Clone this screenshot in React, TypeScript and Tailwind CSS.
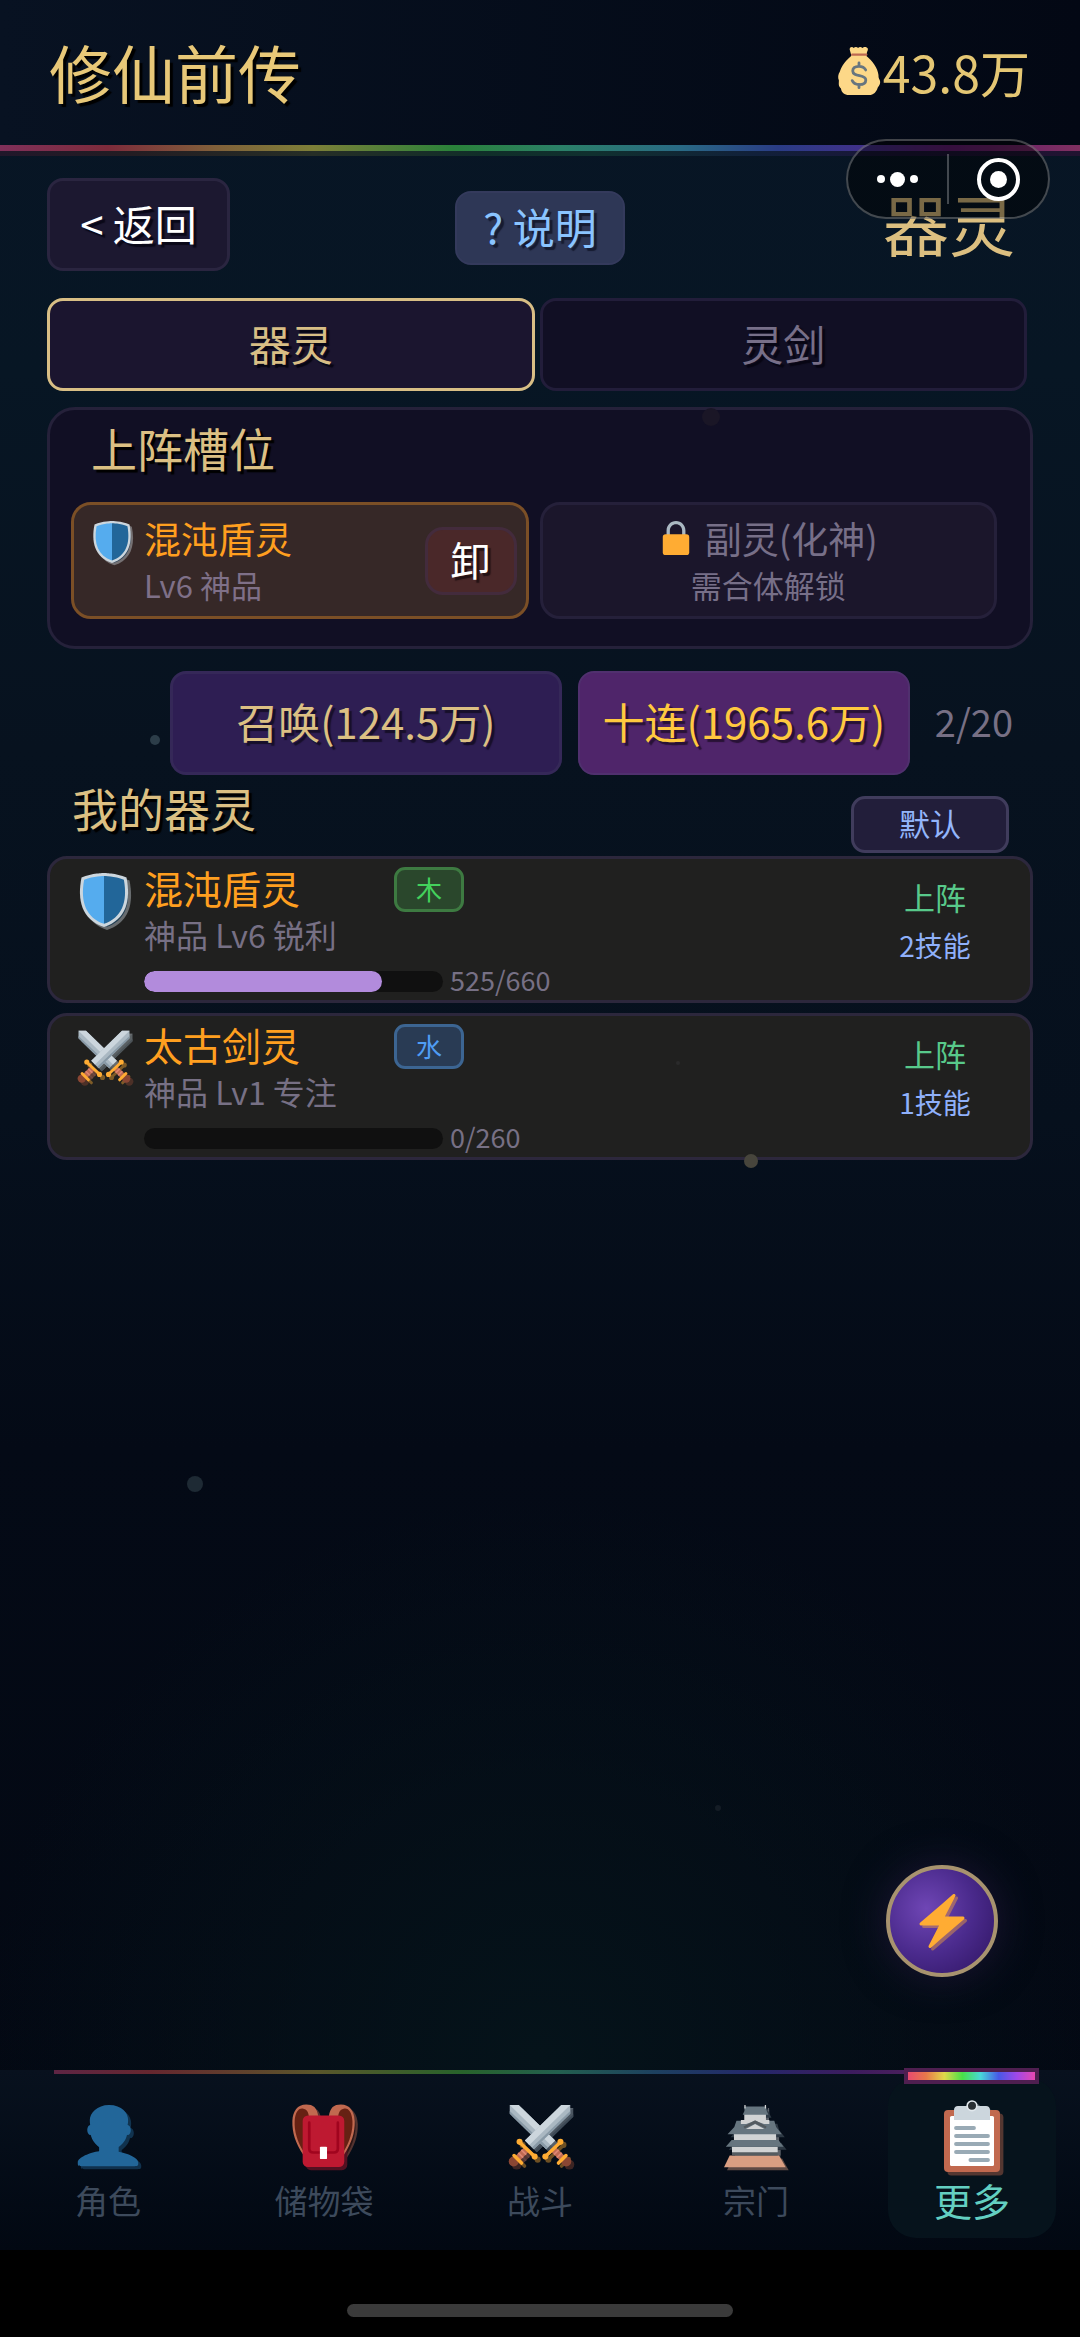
import React, { useState } from "react";
import clsx from "clsx";

type IconProps = { className?: string; shadow?: number };

type Spirit = {
  id: number;
  name: string;
  info: string;
  exp: number;
  maxExp: number;
  element: string;
  skills: number;
  icon: React.ComponentType<IconProps>;
};

// emoji style icon, drawn twice so the lower copy works as its shadow
function Emoji({ className, shadow = 0, children }: IconProps & { children: React.ReactNode }) {
  return (
    <svg viewBox="0 0 36 36" className={clsx("shrink-0 overflow-visible", className)} aria-hidden="true">
      {shadow > 0 && (
        <g opacity={0.42} transform={`translate(${shadow} ${shadow})`}>
          {children}
        </g>
      )}
      {children}
    </svg>
  );
}

function ShieldIcon(props: IconProps) {
  return (
    <Emoji {...props}>
      <path fill="#CCD6DD" d="M33 3c-7-3-15-3-15-3S10 0 3 3C0 18 3 31 18 36c15-5 18-18 15-33z" />
      <path fill="#55ACEE" d="M18 33.884C6.412 29.729 1.961 19.831 4.76 4.444 11.063 2.029 17.928 2 18 2v31.884z" />
      <path fill="#226699" d="M31.24 4.443C25.029 2.041 18.138 2.001 18.071 2.001L18 2v31.884c11.588-4.155 16.039-14.053 13.24-29.441z" />
    </Emoji>
  );
}

function Sword() {
  return (
    <>
      <path fill="#AAB8C2" d="M35 .5h-5L9.500 20.500l5 5L35 5.500z" />
      <path fill="#CCD6DD" d="M30 .5h5L12 23l-2.500-2.500z" />
      <path fill="#8899A6" d="M35 5.500V4L13.500 24.500l1 1z" />
      <path stroke="#BF6952" strokeWidth="3.600" d="M10.500 25.500L5 31" />
      <path stroke="#DD8773" strokeWidth="1" d="M7.500 25.800l2.700 2.700M5.800 27.500l2.700 2.700" />
      <circle fill="#8A4633" cx="3.200" cy="32.400" r="2.800" />
      <path stroke="#FFAC33" strokeWidth="2" strokeLinecap="round" d="M6.500 21.500l8.500 8M3.400 29l4.200 4.200" />
      <circle fill="#FFAC33" cx="6.500" cy="21.300" r="1.700" />
      <circle fill="#FFAC33" cx="15" cy="29.600" r="1.700" />
    </>
  );
}

function SwordsIcon(props: IconProps) {
  return (
    <Emoji {...props}>
      <g fill="none" transform="translate(36 0) scale(-1 1)">
        <Sword />
      </g>
      <g fill="none">
        <Sword />
      </g>
    </Emoji>
  );
}

function MoneyBagIcon(props: IconProps) {
  return (
    <Emoji {...props}>
      <path
        fill="#FDD888"
        d="M12.300 6.500L11 1.800C11-.2 13.200-.4 14 .8c1-1.200 2.600-1 3.300 0 .8-1 2.400-1 3.200 0C21.500-.4 24-.4 24.600 1.200c.3.800-.2 1.800-.6 2.600l-.4 3c4.400 3.600 8.500 9.200 9 14.200 0 1.600.2 2.400.9 3.800 1 2.300-.2 4.200-1.500 5.700-.8 3-3 5.500-6.500 5.500H10.500c-3.500 0-5.700-1.900-6-4.900C2.200 29.500 3 27 2.900 25c-.9-2.200-.6-4.600.7-6.500C5 13.800 8.500 9.700 12.300 6.500z"
      />
      <path stroke="#BE6952" strokeWidth="1.800" strokeLinecap="round" d="M13 5.700h10.400" />
      <path
        fill="none"
        stroke="#67757F"
        strokeWidth="2.100"
        strokeLinecap="round"
        d="M18 12v2.500M18 28v2.500M23 17.200c-1-1.900-2.800-2.700-5-2.700-2.900 0-4.700 1.400-4.700 3.500 0 4.800 9.800 2.200 9.800 6.700 0 2.200-2 3.500-5 3.500-2.500 0-4.400-1-5.200-3"
      />
    </Emoji>
  );
}

function LockIcon(props: IconProps) {
  return (
    <Emoji {...props}>
      <path fill="#AAB8C2" d="M18 0c-5.500 0-10 4.500-10 10v8h3.500v-8c0-3.600 2.900-6.500 6.500-6.500s6.500 2.900 6.500 6.500v8H28v-8c0-5.500-4.500-10-10-10z" />
      <rect fill="#FFAC33" x="4" y="14" width="28" height="22" rx="3" />
    </Emoji>
  );
}

function BoltIcon(props: IconProps) {
  return (
    <Emoji {...props}>
      <path
        fill="#FFAC33"
        d="M32.938 15.651C32.792 15.260 32.418 15 32 15H19.925L26.890 1.458c.219-.426.106-.947-.271-1.243C26.437.071 26.218 0 26 0c-.233 0-.466.082-.653.243L18 6.588 3.347 19.243c-.316.273-.430.714-.284 1.105S3.582 21 4 21h12.075L9.110 34.542c-.219.426-.106.947.271 1.243.182.144.401.215.619.215.233 0 .466-.082.653-.243L18 29.412l14.653-12.655c.317-.273.430-.714.285-1.106z"
      />
    </Emoji>
  );
}

function PersonIcon(props: IconProps) {
  return (
    <Emoji {...props}>
      <path
        fill="#226699"
        d="M24 26.799v-2.566c2-1.348 4.080-3.779 4.703-6.896.186.103.206.170.413.170.991 0 1.709-1.287 1.709-2.873 0-1.562-.823-2.827-1.794-2.865.187-.674.293-1.577.293-2.735C29.324 5.168 26 .527 18.541.527c-6.629 0-10.777 4.641-10.777 8.507 0 1.123.069 2.043.188 2.755-.911.137-1.629 1.352-1.629 2.845 0 1.587.804 2.873 1.796 2.873.206 0 .025-.067.209-.170C8.952 20.453 11 22.885 13 24.232v2.414c-5 .645-12 3.437-12 6.230v1.061C1 35 2.076 35 3.137 35h29.725C33.924 35 35 35 35 33.938v-1.061c0-2.615-6-5.225-11-6.078z"
      />
    </Emoji>
  );
}

function BackpackIcon(props: IconProps) {
  return (
    <Emoji {...props}>
      <path fill="#662113" d="M12 3C8 .5 3 1.500 1 6c-.5 8 1.500 15 6 22V14c0-4 1-6 4-7zM23.500 3c4-2.500 9-1.500 11 3 .5 8-1.500 15-6 22V14c0-4-1-6-4-7z" />
      <path fill="#C1694F" d="M14.800 7C14 2 12 .3 8 .3 3 .3.500 4 .200 9.500 0 16 2 22 6.300 28.500v-2C3 21 1.200 15 1.500 9.500 1.800 5 3.500 2.300 6 2.600c2.500.4 3.300 2.400 3.500 4.400zM20.700 7c.8-5 2.800-6.700 6.800-6.700 5 0 7.500 3.700 7.800 9.200.2 6.500-1.800 12.500-6.100 19v-2c3.300-5.500 5.100-11.500 4.800-17-.3-4.500-2-7.200-4.500-6.900-2.500.4-3.300 2.400-3.500 4.400z" />
      <rect fill="#BE1931" x="6" y="6.500" width="23.400" height="29" rx="3" />
      <path fill="none" stroke="#A0041E" strokeWidth="1.500" strokeLinecap="round" d="M9.700 10.500v14.500c0 1.500 1 2.300 2.300 2.300h11.500c1.400 0 2.300-.8 2.300-2.300V10.500" />
      <rect fill="#fff" x="15.700" y="24" width="4" height="7" rx=".5" />
    </Emoji>
  );
}

function CastleIcon(props: IconProps) {
  return (
    <Emoji {...props}>
      <path fill="#D99E82" d="M3.200 29H31l3.700 6.600H0z" />
      <path fill="#545B60" d="M4.500 27h25.700v2H4.500z" />
      <path fill="#D1D3D4" d="M4.500 24h25.700v3.200H4.500zM5.600 16.800h23.700v3.600H5.600zM11.400 5.500h12.200v5H11.400z" />
      <path fill="#66757F" d="M4.300 20.300h26.300L33.500 24H1zM7 9.400h21.300l1 3.500 3.200 4.100H2l3.800-4.100zM11.500 1.400h12.200l.3 2.600 1 2h-14.500l1-2z" />
      <path fill="#D1D3D4" d="M9.500 9h16v2.200h-3L17.500 9.400l-5 1.800h-3zM12.300 14l5.200-2.700 5.200 2.700z" />
      <path fill="#545B60" d="M11 12.600l6.500-3.400 6.500 3.400-.6 1.200-5.900-2.800-5.900 2.800z" />
      <path stroke="#D1D3D4" strokeWidth=".7" d="M11.800.5v2M23.300.5v2" />
    </Emoji>
  );
}

function ClipboardIcon(props: IconProps) {
  return (
    <Emoji {...props}>
      <rect fill="#C1694F" x="4" y="5" width="28" height="31" rx="2" />
      <rect fill="#fff" x="7" y="8" width="22" height="25" rx=".8" />
      <path fill="#CCD6DD" d="M9 10V5c0-1.200.8-2 2-2h4.300a2.900 2.900 0 0 1 5.400 0H25c1.200 0 2 .8 2 2v5z" />
      <circle fill="#292F33" stroke="#E1E8ED" strokeWidth=".8" cx="18" cy="2.900" r="2.400" />
      <path stroke="#99AAB5" strokeWidth="1.900" strokeLinecap="round" d="M10 14h9M10 18h16M10 22h16M10 26h16M17.200 30H26" />
    </Emoji>
  );
}

const spirits: Spirit[] = [
  { id: 1, name: "混沌盾灵", info: "神品 Lv6 锐利", exp: 525, maxExp: 660, element: "木", skills: 2, icon: ShieldIcon },
  { id: 2, name: "太古剑灵", info: "神品 Lv1 专注", exp: 0, maxExp: 260, element: "水", skills: 1, icon: SwordsIcon },
];

const elementStyles: Record<string, string> = {
  木: "border-[#3d7a41] bg-[#2a472c] text-[#43d15c]",
  水: "border-[#3c6592] bg-[#293b54] text-[#4f9df5]",
};

const navItems = [
  { label: "角色", icon: PersonIcon },
  { label: "储物袋", icon: BackpackIcon },
  { label: "战斗", icon: SwordsIcon },
  { label: "宗门", icon: CastleIcon },
  { label: "更多", icon: ClipboardIcon },
];

const particles = [
  "left-[702px] top-[408px] size-[18px] bg-[#1a1626]",
  "left-[150px] top-[735px] size-[10px] bg-[#2c3d49]",
  "left-[744px] top-[1154px] size-[14px] bg-[#47453c]",
  "left-[676px] top-[1061px] size-[4px] bg-[#2a2a2b]",
  "left-[187px] top-[1476px] size-[16px] bg-[#1e2a34]",
  "left-[715px] top-[1805px] size-[6px] bg-[#141c25]",
];

function SpiritCard({ spirit }: { spirit: Spirit }) {
  const Icon = spirit.icon;
  return (
    <li className="flex h-[147px] items-start rounded-[20px] border-3 border-[#2c273c] bg-[#20201f] pr-[45px] pl-[27px]">
      <Icon className="mt-[14px] size-[54px]" shadow={2} />
      <div className="ml-[13px] flex-1 pt-[3px]">
        <div className="flex h-[50px] items-end">
          <h3 className="w-[250px] text-[39px] leading-[50px] text-[#ff9f1f]">{spirit.name}</h3>
          <span
            className={clsx(
              "flex h-[45px] w-[70px] items-center justify-center rounded-[11px] border-3 pb-[2px] text-[26px] leading-none",
              elementStyles[spirit.element]
            )}
          >
            {spirit.element}
          </span>
        </div>
        <p className="text-[32px] leading-[44px] text-[#777085]">{spirit.info}</p>
        <div className="mt-[11px] flex h-[28px] items-center gap-[7px]">
          <div className="h-[21px] w-[299px] overflow-hidden rounded-full bg-[#101010]">
            <div className="h-full rounded-full bg-[#b28bdc]" style={{ width: `${(spirit.exp / spirit.maxExp) * 100}%` }} />
          </div>
          <span className="pb-[2px] text-[27px] leading-[28px] text-[#777085]">
            {spirit.exp}/{spirit.maxExp}
          </span>
        </div>
      </div>
      <div className="w-[100px] pt-[14px] text-center leading-[48px]">
        <p className="text-[31px] text-[#58c98a]">上阵</p>
        <p className="text-[28px] text-[#8fb0fa]">{spirit.skills}技能</p>
      </div>
    </li>
  );
}

export default function App() {
  const [tab, setTab] = useState("器灵");
  const [page, setPage] = useState("更多");

  return (
    <div className="relative flex min-h-screen flex-col bg-[radial-gradient(circle_at_50%_88%,#05131a_0%,transparent_560px),linear-gradient(180deg,#081525_0%,#071624_16%,#07121f_32%,#06101d_48%,#040a16_62%,#030812_100%)] font-['Noto_Sans_CJK_SC',sans-serif]">
      <header className="bg-linear-to-r from-[#081222] to-[#030814]">
        <div className="flex items-center justify-between pt-[26px] pr-[50px] pb-[29px] pl-[49px] leading-[90px]">
          <h1 className="text-[63px] text-[#e8c878] [text-shadow:3px_3px_1px_#000]">修仙前传</h1>
          <div className="flex items-center text-[50px] text-[#e5c774]">
            <MoneyBagIcon className="size-[48px]" />
            <span>43.8万</span>
          </div>
        </div>
        <div className="h-[6px] bg-[linear-gradient(90deg,#80305a_0%,#7d2b3b_10%,#80603a_20%,#7d7f38_29%,#2a823a_42%,#2b8068_52%,#296a85_63%,#2a3c85_72%,#40308a_80%,#601c70_88%,#803060_100%)]" />
        <div className="h-[5px] bg-[linear-gradient(90deg,#21172a_0%,#231c22_12%,#262e26_29%,#102e29_45%,#10302f_55%,#11203a_70%,#1b1438_84%,#211330_100%)]" />
      </header>

      <main className="flex-1 px-[47px] pt-[22px]">
        <div className="grid grid-cols-[1fr_auto_1fr] items-center">
          <button className="h-[93px] w-[183px] justify-self-start rounded-2xl border-3 border-[#2a2540] bg-[#1c1830] pb-[4px] text-[42px] leading-none text-white [text-shadow:3px_3px_1px_#0a0818]">
            &lt; 返回
          </button>
          <button className="mt-[7px] h-[74px] w-[170px] rounded-2xl border-2 border-[#343a5c] bg-[#2e3756] pb-[4px] text-[42px] leading-none text-[#8ac4ff] [text-shadow:3px_3px_1px_#161b30]">
            ? 说明
          </button>
          <h2 className="pr-[18px] pb-[4px] text-right text-[66px] leading-[89px] text-[#dcbf80]">器灵</h2>
        </div>

        <div role="tablist" className="mt-[27px] mr-[6px] grid grid-cols-2 gap-[5px]">
          {["器灵", "灵剑"].map(name => (
            <button
              key={name}
              role="tab"
              aria-selected={tab === name}
              onClick={() => setTab(name)}
              className={clsx(
                "h-[93px] rounded-2xl border-3 pb-[4px] text-[42px] leading-none [text-shadow:3px_3px_1px_#080614]",
                tab === name ? "border-[#d8be85] bg-[#1b152f] text-[#d8be85]" : "border-[#221d3a] bg-[#110f24] text-[#776f88]"
              )}
            >
              {name}
            </button>
          ))}
        </div>

        <section className="mt-[16px] rounded-[28px] border-3 border-[#25213a] bg-[#110f24] pt-[7px] pr-[33px] pb-[27px] pl-[21px]">
          <h2 className="ml-[20px] text-[46px] leading-[60px] text-[#dcc083] [text-shadow:3px_3px_1px_#000]">上阵槽位</h2>
          <div className="mt-[25px] grid grid-cols-2 gap-[11px]">
            <div className="flex h-[117px] items-center rounded-[20px] border-3 border-[#7b4f26] bg-[#362827] pr-[9px] pl-[17px]">
              <ShieldIcon className="mb-[37px] size-[42px]" shadow={2} />
              <div className="ml-[11px] flex-1 pb-[2px]">
                <p className="text-[37px] leading-[50px] text-[#ff9f1f]">混沌盾灵</p>
                <p className="text-[31px] leading-[44px] text-[#7f7088]">Lv6 神品</p>
              </div>
              <button className="h-[68px] w-[92px] rounded-[18px] border-3 border-[#432b3c] bg-[#4a2829] pb-[4px] text-[40px] leading-none text-white [text-shadow:3px_3px_1px_#241214]">
                卸
              </button>
            </div>
            <div className="flex h-[117px] flex-col items-center justify-center rounded-[20px] border-3 border-[#25203a] bg-[#1b162b] pb-[2px]">
              <p className="flex items-center text-[37px] leading-[50px] text-[#776f88]">
                <LockIcon className="mr-[12px] size-[34px]" />
                副灵(化神)
              </p>
              <p className="text-[31px] leading-[44px] text-[#776f88]">需合体解锁</p>
            </div>
          </div>
        </section>

        <div className="mt-[22px] flex items-center justify-end gap-[16px] pr-[20px]">
          <button className="h-[104px] w-[392px] rounded-2xl border-3 border-[#352858] bg-[#2e1e53] pb-[5px] text-[42px] leading-none text-[#dcc083] [text-shadow:3px_3px_1px_#170f2a]">
            召唤(124.5万)
          </button>
          <button className="h-[104px] w-[332px] rounded-2xl border-2 border-[#50306e] bg-[#4f256a] pb-[5px] text-[42px] leading-none whitespace-nowrap text-[#ffc93f] [text-shadow:3px_3px_1px_#281236]">
            十连(1965.6万)
          </button>
          <span className="pb-[4px] pl-[9px] text-[38px] leading-none text-[#777085]">2/20</span>
        </div>

        <div className="flex items-start justify-between pt-[2px] pr-[24px] pb-[3px] pl-[25px]">
          <h2 className="text-[46px] leading-[60px] text-[#dcc083] [text-shadow:3px_3px_1px_#000]">我的器灵</h2>
          <button className="mt-[19px] h-[57px] w-[158px] rounded-[14px] border-3 border-[#403c5c] bg-[#221e3a] pb-[4px] text-[31px] leading-none text-[#93b5fb]">
            默认
          </button>
        </div>

        <ul className="flex flex-col gap-[10px]">
          {spirits.map(s => (
            <SpiritCard key={s.id} spirit={s} />
          ))}
        </ul>
      </main>

      <nav className="relative bg-linear-to-b from-[#08111e] to-[#020812]">
        <div className="absolute top-0 right-[54px] left-[54px] h-[4px] bg-[linear-gradient(90deg,#5e2544_0%,#66272f_10%,#5a562b_27%,#28632b_42%,#235f4f_52%,#1d4060_62%,#24286a_72%,#3d1c5e_82%,#66265a_100%)]" />
        <div className="grid grid-cols-5 justify-items-center pt-[8px] pb-[12px]">
          {navItems.map(({ label, icon: Icon }) => {
            const active = page === label;
            return (
              <button
                key={label}
                onClick={() => setPage(label)}
                className={clsx("relative flex h-[160px] w-[168px] flex-col items-center rounded-[28px] pt-[22px]", active && "bg-[#06131c]")}
              >
                {active && (
                  <span className="absolute -top-[6px] left-[20px] h-[8px] w-[127px] bg-[linear-gradient(90deg,#e84a70,#e8784a,#e0d84a,#48e048,#48d8d8,#4858e8,#a048e8,#e848b0)] outline-4 outline-[#4f1f50]" />
                )}
                <span className="flex h-[72px] items-center">
                  <Icon className={active ? "size-[72px]" : "size-[64px]"} shadow={1.7} />
                </span>
                <span className={clsx("mt-[8px] leading-[40px]", active ? "text-[38px] text-[#63cfc1]" : "text-[33px] text-[#3d4a5c]")}>
                  {label}
                </span>
              </button>
            );
          })}
        </div>
      </nav>
      <div className="flex h-[87px] justify-center bg-black pt-[54px]">
        <div className="h-[13px] w-[386px] rounded-full bg-[#3a3a3a]" />
      </div>

      {/* floating particles */}
      {particles.map(p => (
        <span key={p} className={clsx("pointer-events-none absolute rounded-full", p)} />
      ))}

      {/* mini program capsule */}
      <div className="absolute top-[139px] right-[30px] flex h-[80px] w-[204px] items-center rounded-full border-2 border-white/25 bg-black/45">
        <button aria-label="菜单" className="flex flex-1 items-center justify-center gap-[5px]">
          <span className="size-[8px] rounded-full bg-white" />
          <span className="size-[15px] rounded-full bg-white" />
          <span className="size-[8px] rounded-full bg-white" />
        </button>
        <span className="h-[50px] w-[2px] bg-white/25" />
        <button aria-label="关闭" className="flex flex-1 items-center justify-center">
          <span className="flex size-[43px] items-center justify-center rounded-full border-4 border-white">
            <span className="size-[17px] rounded-full bg-white" />
          </span>
        </button>
      </div>

      <button
        aria-label="快捷操作"
        className="absolute right-[82px] bottom-[360px] flex size-[112px] items-center justify-center rounded-full border-4 border-[#a8936f] bg-[radial-gradient(circle_at_35%_38%,#6f46b5_0%,#4a2a8c_50%,#361a6c_85%)] shadow-[0_0_40px_#2b1c4a99]"
      >
        <BoltIcon className="size-[54px]" shadow={1.7} />
      </button>
    </div>
  );
}
